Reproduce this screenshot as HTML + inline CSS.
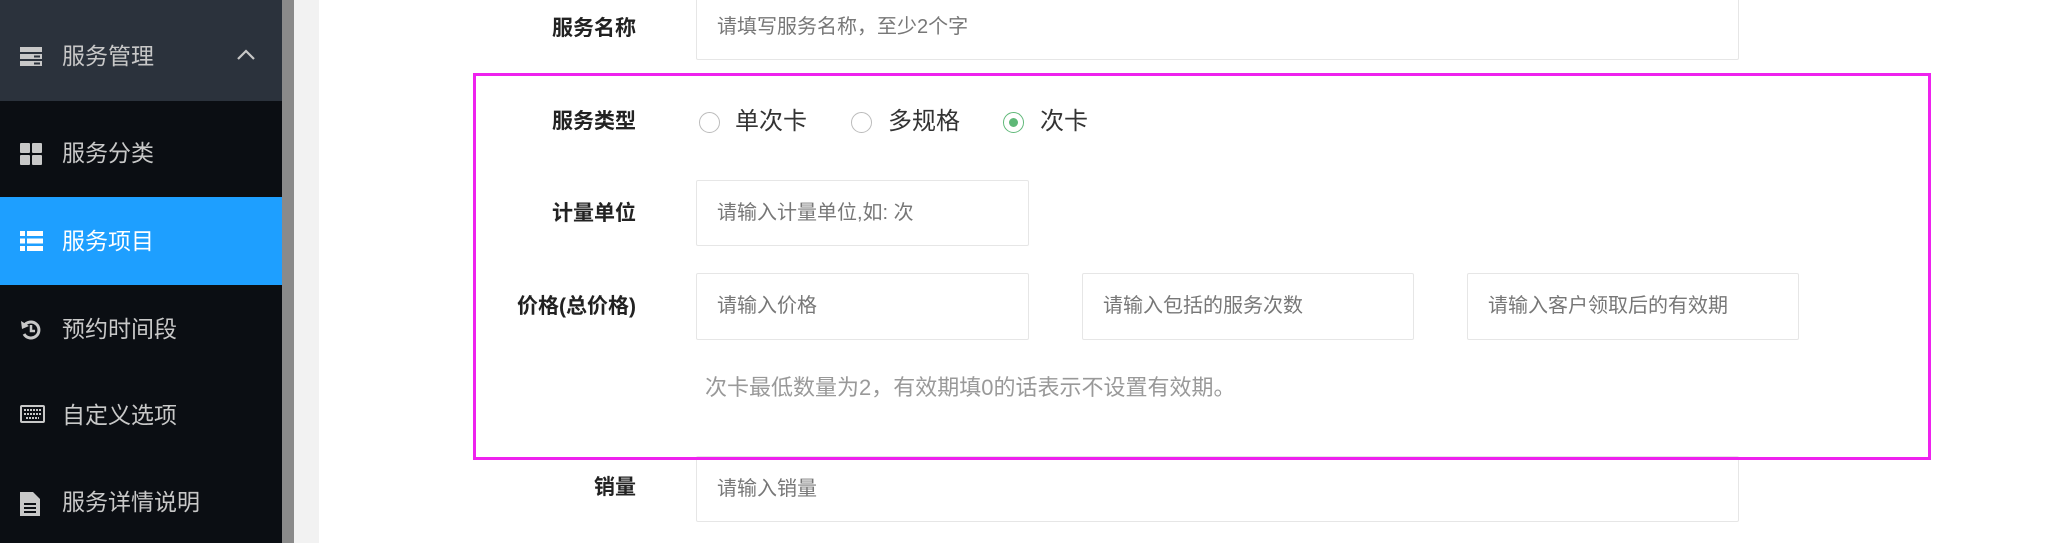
<!DOCTYPE html>
<html><head><meta charset="utf-8"><style>
*{margin:0;padding:0;box-sizing:border-box}
body{width:2056px;height:543px;overflow:hidden;background:#fff;font-family:"Liberation Sans","Noto Sans CJK SC",sans-serif;position:relative}
.sb{position:absolute;left:0;top:0;width:282px;height:543px;background:#0b0e13}
.hd{position:absolute;left:0;top:0;width:282px;height:101px;background:#2b323c}
.it{position:absolute;left:0;width:282px;height:88px;color:#c8c8c8;font-size:23px;line-height:88px}
.it span{position:absolute;left:62px}
.it svg{position:absolute;left:20px;top:34px}
.sel{background:#1e9fff;color:#fff}
.g1{position:absolute;left:282px;top:0;width:12px;height:543px;background:#8a8a8a}
.g2{position:absolute;left:294px;top:0;width:25px;height:543px;background:#f2f2f2}
.lb{position:absolute;right:1420px;font-size:21px;font-weight:bold;color:#222;line-height:30px;text-align:right;white-space:nowrap}
.in{position:absolute;border:1px solid #e6e6e6;border-radius:2px;background:#fff;font-size:20px;color:#777;padding-left:20px;white-space:nowrap}
.box{position:absolute;left:473px;top:73px;width:1458px;height:387px;border:3px solid #ee22ee;z-index:5}
.r{position:absolute;top:112px;width:21px;height:21px;border:1.5px solid #bbb;border-radius:50%}
.rt{position:absolute;top:105px;font-size:24px;color:#333;line-height:34px}
</style></head><body>
<div class="sb">
<div class="hd"></div>
<div class="it" style="top:12px;color:#c8c8c8"><svg width="22" height="20" viewBox="0 0 22 20"><rect x="0" y="1" width="22" height="5" fill="#c8c8c8"/><rect x="0" y="8" width="22" height="5" fill="#c8c8c8"/><rect x="0" y="15" width="22" height="5" fill="#c8c8c8"/><rect x="14" y="9.5" width="6" height="2" fill="#2b323c"/><rect x="14" y="16.5" width="6" height="2" fill="#2b323c"/></svg><span>服务管理</span><svg style="left:236px;top:36px" width="20" height="12" viewBox="0 0 20 12"><path d="M2 11L10 3L18 11" stroke="#c8c8c8" stroke-width="2.2" fill="none"/></svg></div>
<div class="it" style="top:109px"><svg width="22" height="22" viewBox="0 0 22 22"><rect x="0" y="0" width="10" height="10" rx="1" fill="#c8c8c8"/><rect x="12" y="0" width="10" height="10" rx="1" fill="#c8c8c8"/><rect x="0" y="12" width="10" height="10" rx="1" fill="#c8c8c8"/><rect x="12" y="12" width="10" height="10" rx="1" fill="#c8c8c8"/></svg><span>服务分类</span></div>
<div class="it sel" style="top:197px"><svg width="23" height="20" viewBox="0 0 23 20"><rect x="0" y="0" width="5" height="5" fill="#fff"/><rect x="7" y="0" width="16" height="5" fill="#fff"/><rect x="0" y="7.5" width="5" height="5" fill="#fff"/><rect x="7" y="7.5" width="16" height="5" fill="#fff"/><rect x="0" y="15" width="5" height="5" fill="#fff"/><rect x="7" y="15" width="16" height="5" fill="#fff"/></svg><span>服务项目</span></div>
<div class="it" style="top:285px"><svg width="22" height="22" viewBox="0 0 22 22"><path d="M4 7A8 8 0 1 1 4 15" stroke="#c8c8c8" stroke-width="3" fill="none"/><path d="M1 2L2 10L9 7Z" fill="#c8c8c8"/><path d="M11 6V12H15" stroke="#c8c8c8" stroke-width="2.5" fill="none"/></svg><span>预约时间段</span></div>
<div class="it" style="top:371px"><svg width="25" height="18" viewBox="0 0 25 18"><rect x="1" y="1" width="23" height="16" rx="1" stroke="#c8c8c8" stroke-width="2" fill="none"/><path d="M4 5h17M4 9h17M6 13h13" stroke="#c8c8c8" stroke-width="2" stroke-dasharray="2 1"/></svg><span>自定义选项</span></div>
<div class="it" style="top:458px"><svg width="20" height="24" viewBox="0 0 20 24"><path d="M0 0H13L20 7V24H0Z" fill="#c8c8c8"/><path d="M4 12h12M4 16h12M4 20h12" stroke="#0b0e13" stroke-width="2"/></svg><span>服务详情说明</span></div>
</div>
<div class="g1"></div><div class="g2"></div>

<div class="lb" style="top:14px">服务名称</div>
<div class="in" style="left:696px;top:-6px;width:1043px;height:66px;line-height:64px">请填写服务名称，至少2个字</div>

<div class="box"></div>
<div class="lb" style="top:107px">服务类型</div>
<div class="r" style="left:699px"></div><div class="rt" style="left:735px">单次卡</div>
<div class="r" style="left:851px"></div><div class="rt" style="left:888px">多规格</div>
<div class="r" style="left:1003px;border-color:#5fb878"><div style="position:absolute;left:4.5px;top:4.5px;width:9px;height:9px;border-radius:50%;background:#5fb878"></div></div><div class="rt" style="left:1040px">次卡</div>

<div class="lb" style="top:199px">计量单位</div>
<div class="in" style="left:696px;top:180px;width:333px;height:66px;line-height:64px">请输入计量单位,如: 次</div>

<div class="lb" style="top:292px">价格(总价格)</div>
<div class="in" style="left:696px;top:273px;width:333px;height:67px;line-height:65px">请输入价格</div>
<div class="in" style="left:1082px;top:273px;width:332px;height:67px;line-height:65px">请输入包括的服务次数</div>
<div class="in" style="left:1467px;top:273px;width:332px;height:67px;line-height:65px">请输入客户领取后的有效期</div>
<div style="position:absolute;left:705px;top:373px;font-size:22px;color:#999;line-height:30px;white-space:nowrap">次卡最低数量为2，有效期填0的话表示不设置有效期。</div>

<div class="lb" style="top:473px">销量</div>
<div class="in" style="left:696px;top:456px;width:1043px;height:66px;line-height:64px">请输入销量</div>
</body></html>
